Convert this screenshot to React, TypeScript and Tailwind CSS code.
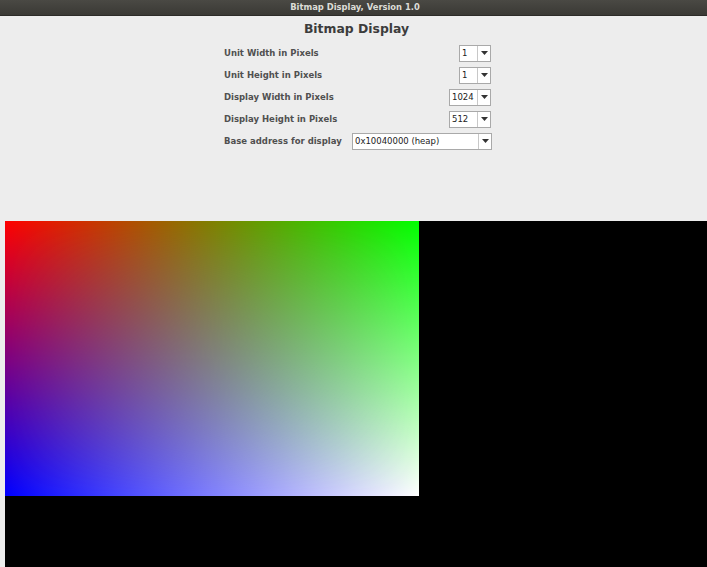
import React from "react";

const rows = [
  { label: "Unit Width in Pixels", value: "1", w: "w-[32px]" },
  { label: "Unit Height in Pixels", value: "1", w: "w-[32px]" },
  { label: "Display Width in Pixels", value: "1024", w: "w-[42px]" },
  { label: "Display Height in Pixels", value: "512", w: "w-[42px]" },
];

function Combo({ value, w }: { value: string; w: string }) {
  return (
    <div className={`flex h-[17px] ${w} border border-[#a9a9a9] bg-white`}>
      <div className="flex-1 whitespace-nowrap pl-[2px] text-[8.5px] leading-[15px] text-[#222]">{value}</div>
      <div className="flex w-[13px] items-center justify-center border-l border-[#c8c8c8]">
        <svg width="7" height="4" viewBox="0 0 7 4">
          <path d="M0 0 L7 0 L3.5 4 Z" fill="#333" />
        </svg>
      </div>
    </div>
  );
}

function Gradient() {
  return (
    <svg width="414" height="275" className="block">
      <defs>
        <linearGradient id="top" x1="0" y1="0" x2="1" y2="0">
          <stop offset="0" stopColor="#ff0000" />
          <stop offset="1" stopColor="#00ff00" />
        </linearGradient>
        <linearGradient id="bot" x1="0" y1="0" x2="1" y2="0">
          <stop offset="0" stopColor="#0000ff" />
          <stop offset="1" stopColor="#ffffff" />
        </linearGradient>
        <linearGradient id="fade" x1="0" y1="0" x2="0" y2="1">
          <stop offset="0" stopColor="#fff" stopOpacity="1" />
          <stop offset="1" stopColor="#fff" stopOpacity="0" />
        </linearGradient>
        <mask id="m">
          <rect width="414" height="275" fill="url(#fade)" />
        </mask>
      </defs>
      <rect width="414" height="275" fill="url(#bot)" />
      <rect width="414" height="275" fill="url(#top)" mask="url(#m)" />
    </svg>
  );
}

export default function App() {
  return (
    <div
      className="flex h-[567px] w-[707px] flex-col overflow-hidden bg-[#ededed]"
      style={{ fontFamily: '"DejaVu Sans", sans-serif' }}
    >
      <div className="flex h-[16px] items-center justify-center bg-gradient-to-b from-[#4a4944] to-[#3a3935] border-b border-[#2c2b28]">
        <span className="ml-[3px] text-[8.4px] font-bold text-[#dcdcd6]">Bitmap Display, Version 1.0</span>
      </div>
      <div className="flex h-[26px] items-center justify-center">
        <h1 className="ml-[6px] text-[12.4px] font-bold text-[#3c3c3c]">Bitmap Display</h1>
      </div>
      <div className="flex flex-col pl-[224px]">
        {rows.map((r) => (
          <div key={r.label} className="flex h-[22px] w-[267px] items-center justify-between">
            <span className="whitespace-nowrap text-[8.5px] font-bold text-[#505050]">{r.label}</span>
            <Combo value={r.value} w={r.w} />
          </div>
        ))}
        <div className="flex h-[22px] w-[268px] items-center justify-between">
          <span className="whitespace-nowrap text-[8.5px] font-bold text-[#505050]">Base address for display</span>
          <Combo value="0x10040000 (heap)" w="w-[140px]" />
        </div>
      </div>
      <div className="flex-1" />
      <div className="flex h-[346px] pl-[5px]">
        <div className="flex-1 bg-black">
          <Gradient />
        </div>
      </div>
    </div>
  );
}
